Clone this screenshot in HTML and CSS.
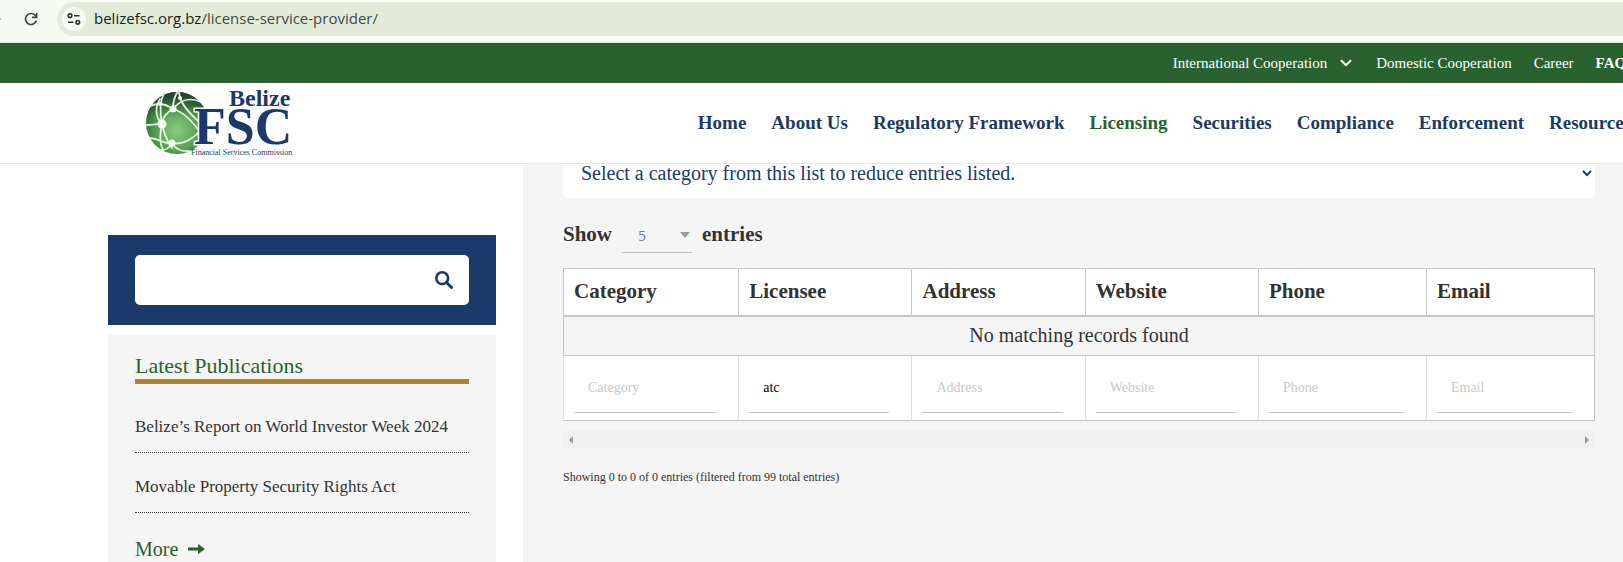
FILE: index.html
```html
<!DOCTYPE html>
<html lang="en">
<head>
<meta charset="utf-8">
<title>License Service Provider</title>
<link rel="stylesheet" href="styles.css">
</head>
<body>
<div class="browser-bar">
  <span class="back-edge"></span>
  <button class="reload" type="button" aria-label="Reload">
    <svg width="14" height="14" viewBox="0 0 14 14" fill="none" stroke="#3b4a3b" stroke-width="1.7"><path d="M12.300 8.500A5.500 5.500 0 1 1 11 3.200L12.400 4.800"/><path d="M12.600 .8v4.500H8"/></svg>
  </button>
  <div class="address">
    <button class="site-info" type="button" aria-label="Site information">
      <svg width="14" height="12" viewBox="0 0 14 12" fill="none" stroke="#2b352b" stroke-width="1.600"><circle cx="3" cy="2.700" r="1.800"/><path d="M7 2.700h5.500M1 9.300h5.500"/><circle cx="10.800" cy="9.300" r="1.800"/></svg>
    </button>
    <p class="url"><span class="host">belizefsc.org.bz</span>/license-service-provider/</p>
  </div>
</div>

<header class="site-header">
  <nav class="top-nav" aria-label="Secondary">
    <a class="has-menu" href="#">International Cooperation
      <svg width="12" height="8" viewBox="0 0 12 8" fill="none" stroke="#fff" stroke-width="2"><path d="M1 1.200l5 5 5-5"/></svg></a>
    <a href="#">Domestic Cooperation</a>
    <a href="#">Career</a>
    <a class="strong" href="#">FAQs</a>
  </nav>
  <div class="main-bar">
    <a class="logo" href="#" aria-label="Belize Financial Services Commission">
      <svg width="150" height="80" viewBox="0 -4 150 80">
        <defs>
          <radialGradient id="globe" cx="50%" cy="62%" r="58%"><stop offset="0" stop-color="#8ccc80"/><stop offset=".5" stop-color="#5fa75a"/><stop offset=".85" stop-color="#357c3c"/><stop offset="1" stop-color="#304d35"/></radialGradient>
          <linearGradient id="shade" x1="0" y1="0" x2="0" y2="1"><stop offset="0" stop-color="#2b3d30"/><stop offset=".4" stop-color="#2b5d35" stop-opacity="0"/></linearGradient>
        </defs>
        <circle cx="32" cy="36" r="31" fill="url(#globe)"/>
        <circle cx="32" cy="36" r="31" fill="url(#shade)"/>
        <g fill="none" stroke="#e2f4dc" stroke-width="1.800" stroke-linecap="round">
          <path d="M19 6C14 16 15 27 17 37C19 47 23 55 27 61"/>
          <path d="M33 4C29 10 28 15 28 22C22 25 18 30 17 37C15 47 14 55 18 63"/>
          <path d="M3 20C12 15 21 17 28 22C39 25 49 36 57 48"/>
          <path d="M28 22C35 13 45 10 56 15"/>
          <path d="M34 6C36 19 46 27 56 37"/>
          <path d="M2 38C8 38 12 37 17 37M17 37C10 30 10 20 15 12"/>
          <path d="M4 51C12 51 18 56 27 57C39 57 48 52 55 44"/>
          <path d="M27 57C31 62 36 65 44 64M27 57C23 62 20 64 15 63"/>
        </g>
        <g fill="#f3fbf0"><circle cx="17" cy="37" r="4.500"/><circle cx="27" cy="56" r="3.500"/><circle cx="28" cy="22" r="3.500"/><circle cx="15" cy="17" r="2"/><circle cx="35" cy="11" r="2"/></g>
        <g class="logo-text">
          <text class="logo-name" x="84" y="19">Belize</text>
          <text class="logo-abbr" x="49" y="57">FSC</text>
          <text class="logo-full" x="46" y="68">Financial Services Commission</text>
        </g>
      </svg>
    </a>
    <nav class="main-nav" aria-label="Primary">
      <a href="#">Home</a>
      <a href="#">About Us</a>
      <a href="#">Regulatory Framework</a>
      <a class="current" href="#">Licensing</a>
      <a href="#">Securities</a>
      <a href="#">Compliance</a>
      <a href="#">Enforcement</a>
      <a href="#">Resources</a>
    </nav>
  </div>
</header>

<div class="page">
  <aside class="sidebar">
    <form class="search">
      <div class="search-field">
        <input type="search" aria-label="Search">
        <button type="button" aria-label="Submit search">
          <svg width="18" height="18" viewBox="0 0 18 18" fill="none" stroke="#1c3a69"><circle cx="7.200" cy="7.200" r="5.900" stroke-width="2.600"/><path d="M11.500 11.500l5 5" stroke-width="3" stroke-linecap="round"/></svg>
        </button>
      </div>
    </form>
    <section class="publications">
      <h2>Latest Publications</h2>
      <ul>
        <li><a href="#">Belize’s Report on World Investor Week 2024</a></li>
        <li><a href="#">Movable Property Security Rights Act</a></li>
      </ul>
      <a class="more" href="#">More
        <svg width="17" height="10" viewBox="0 0 17 10" fill="#296230"><path d="M0 3.500h10V0.800Q10.300 0 11 .6L16.300 4.500Q16.700 5 16.300 5.500L11 9.400Q10.300 10 10 9.200V6.500H0z"/></svg></a>
    </section>
  </aside>

  <main class="content">
    <select class="category" aria-label="Category filter">
      <option>Select a category from this list to reduce entries listed.</option>
    </select>
    <label class="length">Show
      <span class="length-select"><select><option>5</option></select></span>
      entries</label>
    <table class="records">
      <colgroup><col class="first"><col class="mid"><col class="mid"><col class="mid"><col><col></colgroup>
      <thead>
        <tr><th>Category</th><th>Licensee</th><th>Address</th><th>Website</th><th>Phone</th><th>Email</th></tr>
      </thead>
      <tbody>
        <tr><td colspan="6">No matching records found</td></tr>
      </tbody>
      <tfoot>
        <tr>
          <td><input type="text" placeholder="Category" aria-label="Category"></td>
          <td><input type="text" placeholder="Licensee" aria-label="Licensee" value="atc"></td>
          <td><input type="text" placeholder="Address" aria-label="Address"></td>
          <td><input type="text" placeholder="Website" aria-label="Website"></td>
          <td><input type="text" placeholder="Phone" aria-label="Phone"></td>
          <td><input type="text" placeholder="Email" aria-label="Email"></td>
        </tr>
      </tfoot>
    </table>
    <div class="scroll-track"><span class="arrow left"></span><span class="arrow right"></span></div>
    <p class="summary">Showing 0 to 0 of 0 entries (filtered from 99 total entries)</p>
  </main>
</div>
</body>
</html>
```
FILE: styles.css
```css
* { box-sizing: border-box; }
html { overflow: hidden; }
body {
  margin: 0;
  min-height: 100vh;
  display: flex;
  flex-direction: column;
  overflow: hidden;
  background: #fff;
  color: #333;
  font-family: Georgia, "Liberation Serif", serif;
}
a { text-decoration: none; color: inherit; white-space: nowrap; }
button { border: 0; padding: 0; background: none; display: flex; align-items: center; justify-content: center; }
svg { flex: none; }

/* Browser toolbar */
.browser-bar {
  display: flex;
  align-items: center;
  height: 43px;
  padding: 2px 0 6px;
  background: #f8fbf2;
  border-bottom: 1px solid #dfe6d8;
}
.back-edge { width: 1px; height: 2px; margin-right: 23px; background: #b5bab0; }
.reload { width: 14px; }
.address {
  flex: 1;
  display: flex;
  align-items: center;
  gap: 8px;
  height: 34px;
  margin-left: 19px;
  padding-left: 5px;
  background: #e3ecdb;
  border-radius: 17px 0 0 17px;
}
.site-info { width: 24px; height: 24px; border-radius: 50%; background: #f8fbf2; }
.url { margin: 0; padding-bottom: 2px; font: 15px/20px "Open Sans", "Noto Sans", sans-serif; color: #414941; }
.host { color: #181d18; }

/* Site header */
.site-header { position: relative; z-index: 1; background: linear-gradient(#296230 40px, #fff 40px); border-bottom: 1px solid #e6e6e6; }
.top-nav {
  display: flex;
  align-items: center;
  justify-content: flex-end;
  gap: 22px;
  height: 40px;
  margin-right: -9px;
  font-size: 15px;
  color: #fff;
}
.has-menu { display: flex; align-items: center; gap: 13px; margin-right: 2px; }
.strong { font-weight: bold; }
.main-bar { display: flex; align-items: center; justify-content: space-between; height: 80px; padding-left: 145px; }
.logo { display: flex; }
.logo-text { fill: #1c3a69; font-weight: bold; }
.logo-name { font-size: 24px; }
.logo-abbr { font-size: 52px; stroke: #fff; stroke-width: 3px; paint-order: stroke; }
.logo-full { font-size: 8px; font-weight: normal; }
.main-nav { display: flex; gap: 25px; margin-right: -8px; font-size: 19px; font-weight: bold; color: #1c3a69; }
.current { color: #296230; }

/* Page columns */
.page { flex: 1; display: grid; grid-template-columns: 523px 1fr; margin-top: -16px; }
.sidebar { padding: 87px 27px 0 108px; display: flex; flex-direction: column; gap: 10px; }
.search { padding: 20px 27px; background: #1c3a69; }
.search-field { display: flex; height: 50px; padding-right: 16px; background: #fff; border-radius: 5px; }
.search-field input { flex: 1; min-width: 0; border: 0; padding: 0 16px; background: none; font: inherit; }
.publications { flex: 1; padding: 19px 27px 0; background: #f5f5f5; color: #333; }
.publications h2 { margin: 0; padding-bottom: 1px; border-bottom: 5px solid #ad832d; color: #296230; font-size: 22px; line-height: 24px; font-weight: normal; }
.publications ul { margin: 9px 0 0; padding: 0; list-style: none; }
.publications li { padding: 22px 0 13px; border-bottom: 1px dotted #333; font-size: 17px; line-height: 24px; }
.more { display: flex; align-items: center; gap: 10px; margin-top: 24px; color: #296230; font-size: 20px; line-height: 24px; }

.content { padding: 0 28px 0 40px; background: #f5f5f5; }
.category { display: block; width: 100%; height: 50px; border: 0; border-radius: 5px; padding: 0 1px 0 14px; background: #fff; color: #1c3a69; font: 20px "Liberation Serif", serif; }
.length { display: flex; align-items: center; gap: 10px; height: 37px; margin-top: 18px; font-size: 21px; font-weight: bold; }
.length-select { position: relative; align-self: stretch; border-bottom: 1px solid #bdbdbd; }
.length-select select { appearance: none; width: 70px; height: 36px; padding: 2px 16px 0; border: 0; background: none; color: #6f7f99; font: 14px "Open Sans", sans-serif; }
.length-select::after { content: ""; position: absolute; right: 2px; top: 16px; border: 5px solid transparent; border-top: 6px solid #999; border-bottom: 0; }

/* Records table */
.records { width: 100%; margin-top: 15px; border-collapse: collapse; table-layout: fixed; border: 1px solid #c6c6c6; font-size: 20px; }
.records .first { width: 17%; }
.records .mid { width: 16.8%; }
.records th { height: 47px; padding: 0 10px; background: #fff; border: 1px solid #c6c6c6; border-bottom-width: 2px; text-align: left; font-size: 21px; }
.records tbody td { height: 40px; padding: 0; text-align: center; border-bottom: 1px solid #c6c6c6; }
.records tfoot td { height: 65px; padding: 7px 22px 7px 10px; background: #fff; border-left: 1px solid #ddd; }
.records tfoot input { display: block; width: 100%; height: 50px; padding: 0 14px; border: 0; border-bottom: 1px solid #c2c2c2; background: none; font: 14px "Liberation Serif", serif; color: #000; }
.records tfoot input::placeholder { color: #c8c8c8; }

.scroll-track { display: flex; align-items: center; justify-content: space-between; height: 17px; margin-top: 10px; padding: 0 6px; background: #f0f0f0; }
.arrow { border: 4px solid transparent; }
.left { border-left: 0; border-right-color: #999; }
.right { border-right: 0; border-left-color: #999; }
.summary { margin: 20px 0 0; font-size: 12px; line-height: 18px; }
```
